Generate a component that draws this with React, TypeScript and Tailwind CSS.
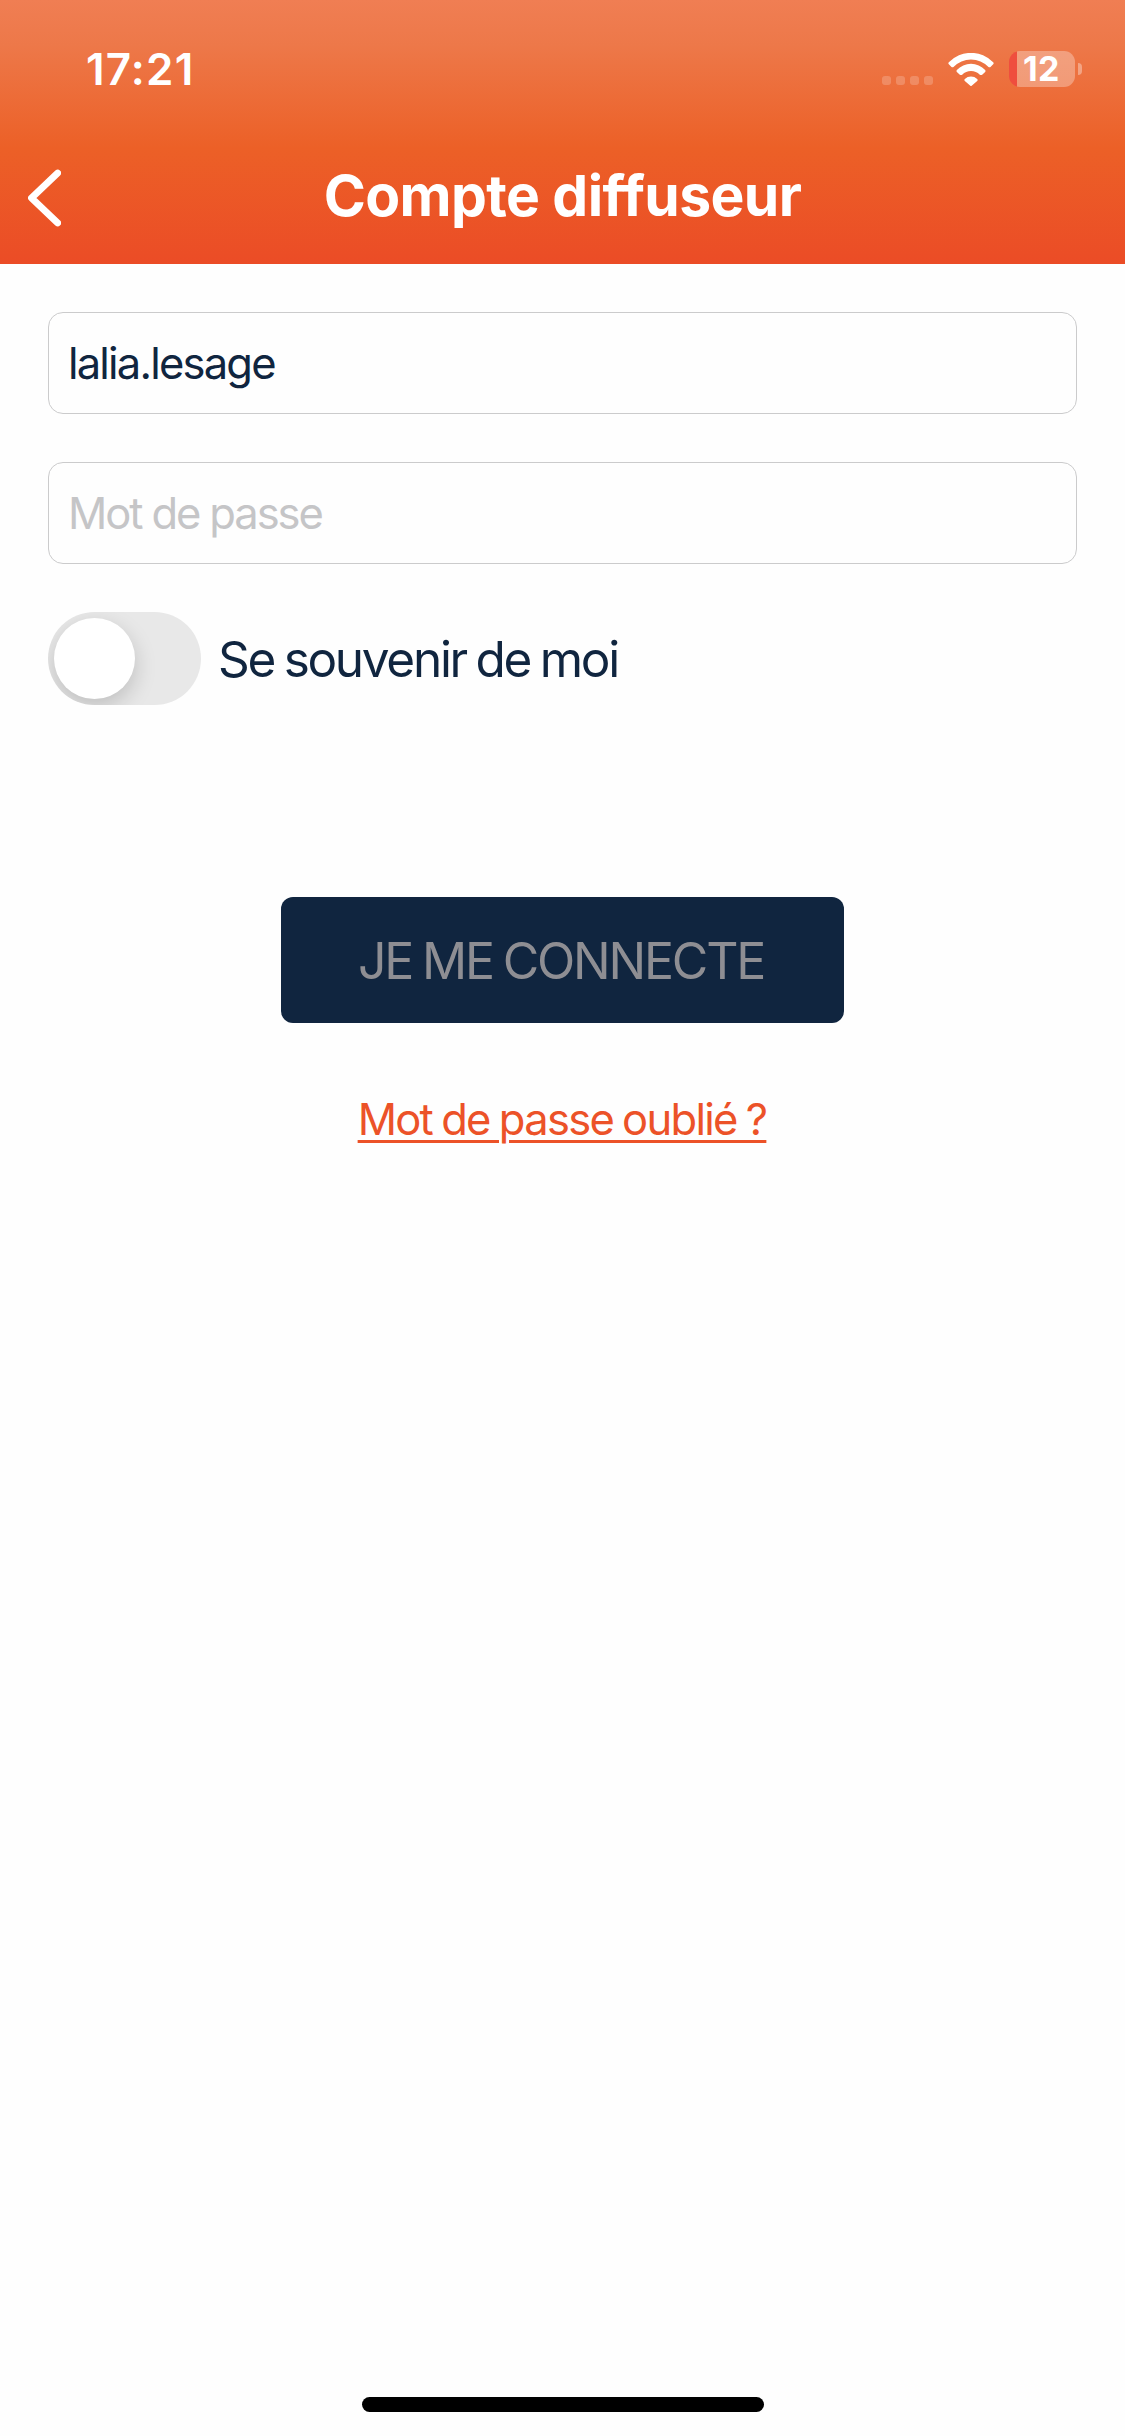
import React, { useState } from "react";

const StatusBar = () => (
  <div className="flex h-[138px] items-center justify-between pl-[86px] pr-[43px] text-white">
    <span className="text-[44px] font-semibold leading-none tracking-[1.2px]">
      17:21
    </span>
    <div className="flex items-center">
      <div className="mr-[15px] mt-[23px] flex gap-[5px]">
        {[0, 1, 2, 3].map((dot) => (
          <span key={dot} className="size-[9px] rounded-[3px] bg-white/20" />
        ))}
      </div>
      <svg
        viewBox="0 0 137 99"
        className="mr-[15px] h-[33px] w-[46px]"
        fill="currentColor"
      >
        <path d="M2 28A92 92 0 0 1 135 28Q138 31 135 34L127 42Q124 44 121 42A73 73 0 0 0 16 42Q13 44 10 42L2 34Q-1 31 2 28Z" />
        <path d="M26 51A58 58 0 0 1 111 51Q113.500 54 111 57L102 65Q98 67 95 65A38 38 0 0 0 42 65Q39 67 35 65L26 57Q23.500 54 26 51Z" />
        <path d="M50 78A27 27 0 0 1 87 78Q90 81 87 84L70.500 98Q68.500 100 66.500 98L50 84Q47 81 50 78Z" />
      </svg>
      <div className="flex h-9 w-[66px] items-center rounded-[11px] bg-[linear-gradient(to_right,#ef4e3e_8px,rgba(255,255,255,0.3)_8px)] pl-[14px]">
        <span className="pb-px text-[34px] font-bold leading-none tracking-[0.3px]">
          12
        </span>
      </div>
      <span className="ml-[3px] h-3 w-1 rounded-r-full bg-white/35" />
    </div>
  </div>
);

const Header = ({ title }: { title: string }) => (
  <header className="h-[264px] bg-[linear-gradient(to_bottom,#f07e53_0px,#ed7849_45px,#ec6027_148px,#eb4c26_264px)]">
    <StatusBar />
    <div className="grid h-[118px] grid-cols-[100px_1fr_100px] items-center text-white">
      <button type="button" aria-label="Retour" className="pl-7 pt-px">
        <svg
          viewBox="0 0 33 58"
          className="h-[58px] w-[33px]"
          fill="none"
          stroke="currentColor"
          strokeWidth="6.8"
          strokeLinecap="round"
          strokeLinejoin="round"
        >
          <path d="M29.700 4L3.500 29L29.700 54" />
        </svg>
      </button>
      <h1 className="pb-[3px] text-center text-[57px] font-bold leading-none tracking-[-0.6px]">
        {title}
      </h1>
    </div>
  </header>
);

const inputStyle =
  "h-[102px] w-full rounded-[15px] border border-[#cbcbcc] bg-transparent px-[19px] text-[43.5px] tracking-[-1.8px] outline-none placeholder:tracking-[-2.1px] placeholder:text-[#c5c5c7]";

const App = () => {
  const [login, setLogin] = useState("lalia.lesage");
  const [password, setPassword] = useState("");
  const [remember, setRemember] = useState(false);

  return (
    <div className="flex h-[2436px] w-[1125px] flex-col bg-[#fefefe] font-['Inter','Liberation_Sans',sans-serif] text-[#10253f]">
      <Header title="Compte diffuseur" />

      <form className="flex flex-1 flex-col px-12 pt-12">
        <input
          className={inputStyle}
          value={login}
          onChange={(e) => setLogin(e.target.value)}
        />
        <input
          type="password"
          className={`mt-12 ${inputStyle}`}
          placeholder="Mot de passe"
          value={password}
          onChange={(e) => setPassword(e.target.value)}
        />

        <div className="mt-12 flex items-center">
          <button
            type="button"
            role="switch"
            aria-checked={remember}
            aria-label="Se souvenir de moi"
            onClick={() => setRemember(!remember)}
            className={`flex h-[93px] w-[153px] items-center overflow-hidden rounded-full bg-[#e8e8e8] px-1.5 ${
              remember ? "justify-end" : ""
            }`}
          >
            <span className="size-[81px] rounded-full bg-white shadow-[0_8px_22px_rgba(0,0,0,0.18)]" />
          </button>
          <span className="ml-[17px] pt-0.5 text-[49.5px] leading-none tracking-[-2.3px] [word-spacing:-2px]">
            Se souvenir de moi
          </span>
        </div>

        <button
          type="button"
          className="mt-48 h-[126px] w-[563px] self-center rounded-xl bg-[#10253f] pr-[3px] pt-0.5 text-[50px] leading-none tracking-[-2.2px] text-[#8e8e93] [word-spacing:-2px]"
        >
          JE ME CONNECTE
        </button>

        <a
          href="#"
          className="mr-px mt-[71px] self-center text-[43.5px] leading-[50px] tracking-[-1.7px] text-[#ec5228] underline decoration-[3px] underline-offset-[5px] [word-spacing:-1.500px]"
        >
          Mot de passe oublié ?
        </a>
      </form>

      <div className="mb-6 h-[15px] w-[402px] self-center rounded-full bg-black" />
    </div>
  );
};

export default App;
